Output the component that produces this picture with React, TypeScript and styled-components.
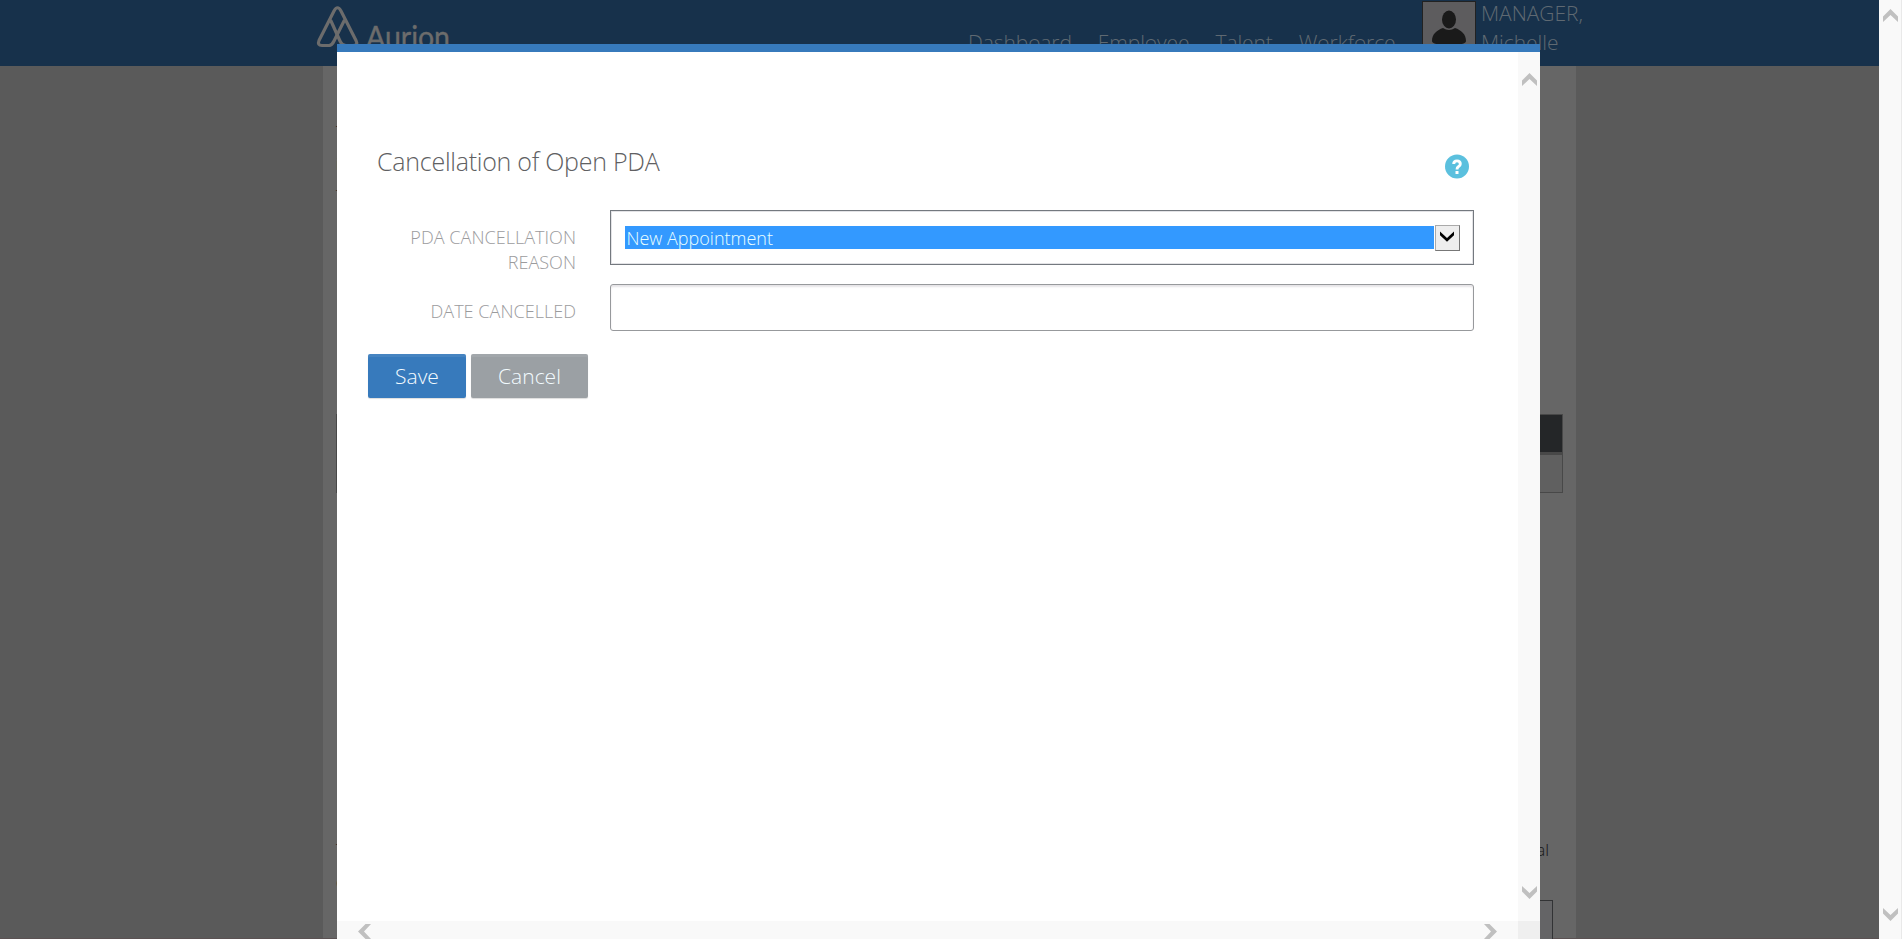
import React from "react";
import styled, { createGlobalStyle } from "styled-components";

const Global = createGlobalStyle`
  *{box-sizing:border-box}
  html,body{margin:0;height:100%;overflow:hidden}
  body{font-family:"Open Sans","Noto Sans",sans-serif;font-weight:300;background:#5a5a5a}
`;
const Screen = styled.div`display:flex;width:1902px;height:939px;overflow:hidden;`;
const Backdrop = styled.div`position:relative;flex:1;height:939px;background:linear-gradient(#5b5253,#5b5253) bottom/100% 1px no-repeat #5a5a5a;overflow:hidden;`;
const Header = styled.header`display:flex;height:66px;background:#17314b;color:#5f6972;font-size:21px;line-height:29px;`;
const Brand = styled.div`width:652px;padding-left:310px;`;
const NavItems = styled.nav`display:flex;width:454px;margin-left:316px;padding-top:28px;gap:26px;white-space:nowrap;letter-spacing:-.1px;`;
const Bar = styled.div`display:flex;width:100%;`;
const Avatar = styled.div`width:54px;height:54px;margin-top:1px;border:1px solid #222;background:#5d5c5e;`;
const User = styled.div`width:110px;margin:-1px 0 0 5px;letter-spacing:-.05px;`;
const Content = styled.main`width:1253px;height:873px;margin-left:323px;padding:50px 13px 0 13px;background:#666;border-bottom:1px solid #5b5253;color:#161616;font-size:16px;line-height:32px;`;
const Line = styled.div<{ $gap?: number }>`display:flex;justify-content:space-between;margin-top:${p => p.$gap ?? 0}px;padding-right:14px;height:32px;`;
const Ending = styled.span`font-size:17px;`;
const Table = styled.div`height:79px;width:1227px;margin-top:202px;border:1px solid #484848;display:flex;flex-direction:column;gap:3px;background:#484848;`;
const Row = styled.div<{ $head?: boolean }>`height:37px;background:${p => (p.$head ? "#242628" : "#606060")};`;
const Box = styled.div`width:1207px;height:60px;margin:2px 0 0 10px;border:1px solid #323335;background:#646466;`;
const Modal = styled.section`position:absolute;left:337px;top:44px;width:1203px;height:895px;border-top:8px solid #377abc;background:#fff;display:grid;grid-template-columns:1181px 22px;grid-template-rows:869px 18px;`;
const Body = styled.div`padding:88px 44px 0 31px;`;
const TitleRow = styled.div`display:flex;justify-content:space-between;height:70px;padding:0 4px 0 9px;`;
const Title = styled.h1`margin:3px 0 0;font-size:25px;line-height:36px;font-weight:300;letter-spacing:-.25px;color:#606062;white-space:nowrap;`;
const HelpIcon = styled.svg`margin-top:13px;`;
const Field = styled.div<{ $h: number }>`display:flex;height:${p => p.$h}px;`;
const Label = styled.label`width:208px;margin-right:34px;padding-top:15px;text-align:right;font-size:18.1px;line-height:25px;color:#9b9b9d;`;
const Select = styled.div`flex:1;height:55px;border:1px solid #74797f;padding:14px 13px 0 14px;display:flex;gap:1px;box-shadow:inset 0 0 0 1px #e3e3e6;`;
const Option = styled.div`flex:1;height:23px;margin-top:1px;background:#3399ff;color:#e9ffff;font-size:18px;line-height:25px;padding-left:1.5px;`;
const Drop = styled.div`width:25px;height:26px;border:1px solid #777;border-top-color:#aaa;border-left-color:#aaa;background:#eee;`;
const Input = styled.div`flex:1;height:47px;border:1px solid #97999c;border-radius:3px;box-shadow:inset 0 2px 2px #e6e4e7;`;
const Actions = styled.div`display:flex;gap:5px;`;
const Button = styled.button<{ $w: number; $c: string }>`width:${p => p.$w}px;height:44px;padding:0;border:0;border-radius:2px;background:${p => p.$c};box-shadow:inset 0 3px 0 rgba(255,255,255,.08),0 1px 1px #ddd;color:#f3fbff;font:300 21px/44px "Open Sans",sans-serif;`;
const VScroll = styled.div<{ $top: number; $bottom: number }>`display:flex;flex-direction:column;align-items:center;justify-content:space-between;padding:${p => p.$top}px 0 ${p => p.$bottom}px;width:22px;background:#f9f9f9;`;
const HScroll = styled.div`display:flex;justify-content:space-between;align-items:flex-start;padding:3px 21px 0 21px;background:#f9f9f9;overflow:hidden;`;
const Corner = styled.div`background:#efefef;`;
const PageScroll = styled(VScroll)`width:23px;height:939px;border-right:1px solid #e9e9e9;`;

const Chevron = ({ turn = 0 }: { turn?: number }) => (
  <svg width={turn % 180 ? 13 : 15} height={turn % 180 ? 15 : 13} viewBox={turn % 180 ? "1 -1 13 15" : "0 0 15 13"}>
    <path transform={`rotate(${turn} 7.5 6.5)`} d="M0 7.500 7.500 0 15 7.500V13L7.500 6 0 13Z" fill="#c0c0c0" />
  </svg>
);

const Logo = () => (
  <svg width="145" height="60" viewBox="310 0 145 60" fill="none" stroke="#6c6c6c">
    <g strokeWidth="3.2" strokeLinejoin="round" strokeLinecap="round">
      <path d="M329 45.500H322Q317 45.500 319 40.500L334 11Q337.500 4.500 341 11L356 40.500Q358.500 45.500 353 45.500H346Q342 45.500 340 41L331 21" />
      <path d="M344 21 334 41Q332 45.500 329 45.500" />
    </g>
    <text x="366" y="47.500" textLength="84" lengthAdjust="spacingAndGlyphs" fontFamily="Lato, sans-serif" fontSize="30" fontWeight="400" fill="#6c6c6c" strokeWidth=".4">Aurion</text>
  </svg>
);

export default function App() {
  return (
    <>
      <Global />
      <Screen>
        <Backdrop>
          <Header>
            <Bar>
              <Brand><Logo /></Brand>
              <NavItems>
                <span>Dashboard</span><span>Employee</span><span>Talent</span><span>Workforce</span>
              </NavItems>
              <Avatar>
                <svg width="52" height="52" viewBox="0 0 52 52" fill="#1a1a1a">
                  <ellipse cx="26" cy="17.500" rx="7" ry="9" />
                  <path d="M9 39C9 32 14 28 20 26Q26 30 32 26C38 28 43 32 43 39Q43 43 26 43T9 39Z" />
                </svg>
              </Avatar>
              <User>MANAGER,<br />Michelle</User>
            </Bar>
          </Header>
          <Content>
            <Line>T</Line>
            <Line>i</Line>
            <Line>T</Line>
            <Table><Row $head /><Row /></Table>
            <Line $gap={341}><span>T</span><Ending>al</Ending></Line>
            <Line>c</Line>
            <Box />
          </Content>
          <Modal>
            <Body>
              <TitleRow>
                <Title>Cancellation of Open PDA</Title>
                <HelpIcon width="26" height="26" viewBox="0 0 26 26">
                  <circle cx="13" cy="13.500" r="12" fill="#5bc0de" />
                  <path d="M9.700 11Q9.700 7.900 13 7.900T16.300 11Q16.300 12.500 14.600 13.500T13 16.500" fill="none" stroke="#fff" strokeWidth="2.900" />
                  <path d="M11.500 18h3v3h-3z" fill="#fff" />
                </HelpIcon>
              </TitleRow>
              <Field $h={74}>
                <Label>PDA CANCELLATION REASON</Label>
                <Select>
                  <Option>New Appointment</Option>
                  <Drop>
                    <svg width="23" height="24" viewBox="0 0 23 24"><path d="M4 5.500 11 12 18 5.500V9.200L11 15.700 4 9.200Z" fill="#000" /></svg>
                  </Drop>
                </Select>
              </Field>
              <Field $h={70}>
                <Label>DATE CANCELLED</Label>
                <Input />
              </Field>
              <Actions>
                <Button $w={98} $c="#377abc">Save</Button>
                <Button $w={117} $c="#9ba0a4">Cancel</Button>
              </Actions>
            </Body>
            <VScroll $top={21} $bottom={22}><Chevron /><Chevron turn={180} /></VScroll>
            <HScroll><Chevron turn={270} /><Chevron turn={90} /></HScroll>
            <Corner />
          </Modal>
        </Backdrop>
        <PageScroll $top={9} $bottom={18}><Chevron /><Chevron turn={180} /></PageScroll>
      </Screen>
    </>
  );
}
